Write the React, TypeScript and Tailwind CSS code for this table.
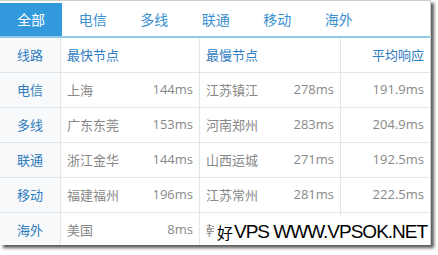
import React from "react";

const tabs = ["全部", "电信", "多线", "联通", "移动", "海外"];
const rows = [
  ["电信", "上海", "144ms", "江苏镇江", "278ms", "191.9ms"],
  ["多线", "广东东莞", "153ms", "河南郑州", "283ms", "204.9ms"],
  ["联通", "浙江金华", "144ms", "山西运城", "271ms", "192.5ms"],
  ["移动", "福建福州", "196ms", "江苏常州", "281ms", "222.5ms"],
  ["海外", "美国", "8ms", "韩", "", ""],
];

const font = { fontFamily: '"Noto Sans CJK SC", "Open Sans", sans-serif' };

export default function App() {
  return (
    <div className="w-[438px] h-[255px] bg-white" style={font}>
      <div className="relative w-[431px] h-[245px] bg-white border-t border-r border-[#cfcfcf] shadow-[3px_3px_3px_rgba(0,0,0,0.65)] overflow-hidden">
        <div className="flex h-[37px] pt-[2px] border-b-2 border-[#8fcbe6]">
          {tabs.map((t, i) => (
            <div
              key={t}
              className={
                i === 0
                  ? "w-[62px] flex items-center justify-center bg-[#3399dd] text-white text-[14px]"
                  : "w-[61.5px] flex items-center justify-center text-[#3a8fd0] text-[14px]"
              }
            >
              {t}
            </div>
          ))}
        </div>
        <div className="grid grid-cols-[61px_139px_141px_1fr] text-[13px]">
          <div className="h-[35px] flex items-center justify-center bg-[#f8f9fa] text-[#2f7cbf] border-b border-r border-[#e3e6e8]">线路</div>
          <div className="h-[35px] flex items-center pl-[6px] text-[#2f7cbf] border-b border-r border-[#e3e6e8]">最快节点</div>
          <div className="h-[35px] flex items-center pl-[6px] text-[#2f7cbf] border-b border-r border-[#e3e6e8]">最慢节点</div>
          <div className="h-[35px] flex items-center justify-end pr-[6px] text-[#2f7cbf] border-b border-[#e3e6e8]">平均响应</div>
          {rows.map((r) => (
            <React.Fragment key={r[0]}>
              <div className="h-[35px] flex items-center justify-center bg-[#f8f9fa] text-[#2f7cbf] border-b border-r border-[#e3e6e8]">{r[0]}</div>
              <div className="h-[35px] flex items-center justify-between px-[6px] text-[#888] border-b border-r border-[#e3e6e8]">
                <span>{r[1]}</span>
                <span style={{ fontFamily: '"Open Sans", sans-serif' }}>{r[2]}</span>
              </div>
              <div className="h-[35px] flex items-center justify-between px-[6px] text-[#888] border-b border-r border-[#e3e6e8]">
                <span>{r[3]}</span>
                <span style={{ fontFamily: '"Open Sans", sans-serif' }}>{r[4]}</span>
              </div>
              <div className="h-[35px] flex items-center justify-end pr-[6px] text-[#888] border-b border-[#e3e6e8]" style={{ fontFamily: '"Open Sans", sans-serif' }}>{r[5]}</div>
            </React.Fragment>
          ))}
        </div>
        <div className="absolute left-[214px] top-[216px] w-[217px] h-[29px] bg-white flex items-center pl-[3px] text-black leading-none whitespace-nowrap overflow-hidden">
          <span className="text-[16px] mr-[1px]" style={{ fontFamily: '"Noto Sans CJK SC", sans-serif' }}>好</span>
          <span className="text-[19px] tracking-[-1px]" style={{ fontFamily: '"Liberation Sans", sans-serif' }}>VPS WWW.VPSOK.NET</span>
        </div>
      </div>
    </div>
  );
}
